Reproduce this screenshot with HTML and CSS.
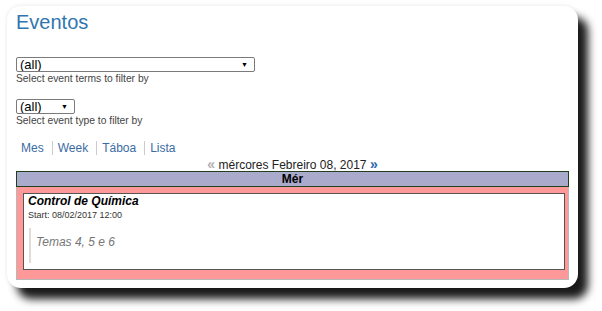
FILE: index.html
```html
<!DOCTYPE html>
<html lang="gl">

<head>
    <meta charset="UTF-8">
    <meta name="viewport" content="width=device-width, initial-scale=1.0">
    <title>Eventos</title>
    <link rel="stylesheet" href="styles.css">
</head>

<body>
    <div class="card">
        <h1 class="title">Eventos</h1>

        <div class="filter">
            <span class="select wide">
                <select>
                    <option>(all)</option>
                </select>
            </span>
            <div class="help">Select event terms to filter by</div>
        </div>

        <div class="filter second">
            <span class="select narrow">
                <select>
                    <option>(all)</option>
                </select>
            </span>
            <div class="help">Select event type to filter by</div>
        </div>

        <ul class="tabs">
            <li><a href="#">Mes</a></li>
            <li><a href="#">Week</a></li>
            <li><a href="#">Táboa</a></li>
            <li><a href="#">Lista</a></li>
        </ul>

        <div class="date-nav">
            <span class="prev">&laquo;</span> mércores Febreiro 08, 2017 <span class="next">&raquo;</span>
        </div>

        <div class="day">
            <div class="day-head">Mér</div>
            <div class="day-cell">
                <div class="event">
                    <div class="event-title">Control de Química</div>
                    <div class="event-start">Start: 08/02/2017 12:00</div>
                    <blockquote class="event-body">Temas 4, 5 e 6</blockquote>
                </div>
            </div>
        </div>
    </div>
</body>

</html>
```

FILE: styles.css
```css
* {
    box-sizing: border-box;
}

html,
body {
    min-height: 311px;
}

body {
    margin: 0;
    padding: 6px 0 0 7px;
    background-color: #fff;
    font-family: "Liberation Sans", Arial, sans-serif;
    color: #000;
}

.card {
    width: 571px;
    height: 282px;
    padding: 5px 9px 9px;
    background-color: #fff;
    border-radius: 14px;
    box-shadow: 10px 11px 9px rgba(0, 0, 0, 0.9), 0 0 4px rgba(0, 0, 0, 0.1);
}

.title {
    margin: 0;
    font-size: 20px;
    line-height: 23px;
    font-weight: normal;
    color: #2f76b0;
}

.filter {
    margin-top: 23px;
}

.filter.second {
    margin-top: 14px;
}

.select {
    position: relative;
    display: block;
    height: 15px;
}

.select.wide {
    width: 239px;
}

.select.narrow {
    width: 59px;
}

.select select {
    appearance: none;
    -webkit-appearance: none;
    display: block;
    width: 100%;
    height: 15px;
    margin: 0;
    padding: 0 0 0 3px;
    border: 1px solid #7a7a7a;
    border-radius: 2px;
    background: #fff;
    font-family: inherit;
    font-size: 13px;
    line-height: 13px;
    color: #000;
}

.select::after {
    content: "\25BC";
    position: absolute;
    right: 7px;
    top: 3px;
    font-size: 7px;
    line-height: 9px;
    pointer-events: none;
}

.help {
    margin-top: 1px;
    font-size: 10.3px;
    line-height: 12px;
    color: #444;
}

.tabs {
    display: flex;
    margin: 14px 0 0;
    padding: 0;
    list-style: none;
    font-size: 12px;
    line-height: 14px;
}

.tabs li {
    padding: 0 8px 0 5px;
}

.tabs li + li {
    border-left: 1px solid #ccc;
}

.tabs a {
    color: #3a6ca4;
    text-decoration: none;
}

.date-nav {
    margin-top: 2px;
    height: 14px;
    font-size: 12px;
    line-height: 14px;
    text-align: center;
    color: #222;
}

.date-nav span {
    font-size: 14px;
    font-weight: bold;
    line-height: 14px;
}

.date-nav .prev {
    color: #b0b0b0;
}

.date-nav .next {
    color: #2d66ad;
}

.day-head {
    height: 16px;
    border: 1px solid #1f3f1f;
    background-color: #aaaacc;
    font-size: 12px;
    font-weight: bold;
    line-height: 14px;
    text-align: center;
}

.day-cell {
    border: 1px solid #b8b8b8;
    border-top: 0;
    background-color: #ff9999;
    padding: 6px 3px 9px 6px;
}

.event {
    height: 77px;
    padding: 0 4px;
    border: 1px solid #555;
    background-color: #fff;
}

.event-title {
    font-size: 12px;
    line-height: 14px;
    font-weight: bold;
    font-style: italic;
}

.event-start {
    margin-top: 2px;
    font-size: 9px;
    line-height: 11px;
    color: #333;
}

.event-body {
    margin: 7px 0 0 1px;
    padding: 7px 0 14px 5px;
    border-left: 2px solid #ddd;
    font-size: 12px;
    line-height: 14px;
    font-style: italic;
    color: #777;
}
```
